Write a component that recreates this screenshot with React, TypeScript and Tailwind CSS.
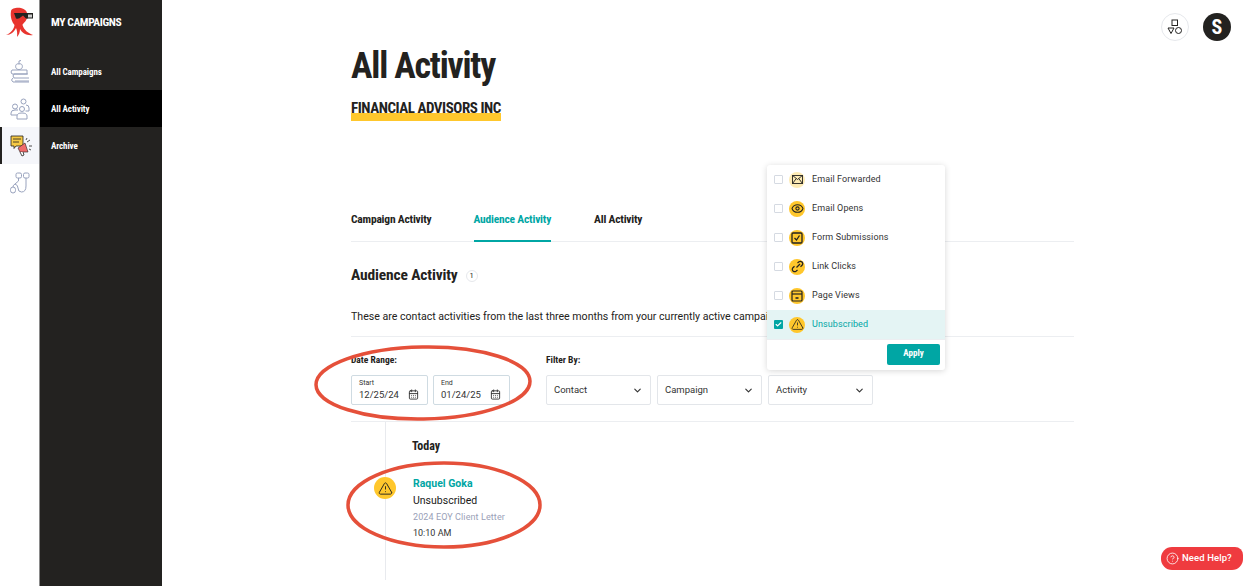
import { ChevronDown, Check, CalendarDays, Eye, TriangleAlert, CircleHelp } from 'lucide-react';
import type { ReactNode } from 'react';

const heading = "font-['Liberation_Sans_Narrow','Roboto_Condensed','Liberation_Sans',sans-serif] font-bold";

const MailIcon = (
  <svg width="11" height="9" viewBox="0 0 12 10" fill="none" stroke="#232220" strokeWidth="1">
    <rect x="0.5" y="0.5" width="11" height="9" />
    <path d="M0.5 0.5 L6 5 L11.5 0.5 M0.5 9.5 L4.5 4 M11.5 9.5 L7.5 4" />
  </svg>
);

const FormIcon = (
  <svg width="12" height="12" viewBox="0 0 12 12" fill="none" stroke="#232220" strokeWidth="1.3">
    <rect x="1" y="1" width="10" height="10" rx="1" />
    <path d="M3.5 6 L5.5 8 L8.5 3.5" />
  </svg>
);

const LinkIcon = (
  <svg width="13" height="13" viewBox="0 0 13 13" fill="none" stroke="#232220" strokeWidth="1.2">
    <path d="M5.5 7.5 L9 4 M6.5 3 L8 1.7 Q9.5 0.7 11 2 Q12.3 3.5 11.3 5 L9.5 6.7 M6.5 10 L5 11.3 Q3.5 12.3 2 11 Q0.7 9.5 1.7 8 L3.5 6.3" />
  </svg>
);

const PageIcon = (
  <svg width="12" height="12" viewBox="0 0 12 12" fill="none" stroke="#232220" strokeWidth="1.2">
    <rect x="1" y="1" width="10" height="10" rx="1" />
    <path d="M1 4 H11" />
    <path d="M4.5 8 H7.5" strokeWidth="1.6" />
  </svg>
);

const navItems = [
  { label: 'All Campaigns', active: false },
  { label: 'All Activity', active: true },
  { label: 'Archive', active: false },
];

const activityOptions = [
  { label: 'Email Forwarded', icon: MailIcon, pale: true },
  { label: 'Email Opens', icon: <Eye size={13} strokeWidth={2} /> },
  { label: 'Form Submissions', icon: FormIcon },
  { label: 'Link Clicks', icon: LinkIcon },
  { label: 'Page Views', icon: PageIcon },
  { label: 'Unsubscribed', icon: <TriangleAlert size={13} strokeWidth={1.5} />, checked: true },
];

function RailButton({ children, active }: { children: ReactNode; active?: boolean }) {
  return (
    <div className={`h-[37px] flex items-center justify-center ${active ? 'bg-[#f5f6fa] border-l-2 border-[#232220]' : ''}`}>
      {children}
    </div>
  );
}

function DateField({ label, value }: { label: string; value: string }) {
  return (
    <div className="w-[77px] h-[30px] border border-[#cfdbe2] rounded-[2px] pl-[7px] pr-[8px]">
      <div className="text-[7px] leading-[9px] pt-[3px] text-[#333]">{label}</div>
      <div className="flex items-center justify-between text-[9.5px] leading-[13px] text-[#333]">
        <span>{value}</span>
        <CalendarDays size={11} strokeWidth={2} className="text-[#333]" />
      </div>
    </div>
  );
}

function FilterSelect({ label }: { label: string }) {
  return (
    <div className="w-[105px] h-[30px] border border-[#e3e6ea] rounded-[2px] flex items-center justify-between pl-[7px] pr-[7px] text-[9.5px] text-[#333]">
      <span>{label}</span>
      <ChevronDown size={11} strokeWidth={2.5} />
    </div>
  );
}

export default function App() {
  return (
    <div className="w-[1249px] h-[586px] overflow-hidden flex bg-white font-['Roboto',sans-serif] text-[#232220]">
      {/* icon rail */}
      <aside className="w-[40px] h-full flex flex-col border-r border-[#8a8a8a] shrink-0">
        <div className="h-[57px]">
          <svg width="39" height="40" viewBox="0 0 39 40">
            <path d="M11 11 C12 7 25 6 27 13 L27 18 C26 22 23 23 22.5 25 C24 30 28 33 33 35 C27 36 22 33 20 29 C20 32 19 35 17 37 C17.5 33 17 30 16 28 C14 32 11 35 6 35 C11 33 14 29 14.5 25 C12 22 10 17 11 11Z" fill="#e8342e" />
            <path d="M14 13 H33 V18.5 H28 Q26 19.5 24.5 17 L23 15.5 L21 17 Q19 19.5 16 18.5 Z" fill="#232220" />
            <path d="M28 14.5 H32 V17.5 H28Z" fill="#cfcfcf" />
          </svg>
        </div>
        <div className="h-[33px] pt-[3px] flex justify-center">
          <svg width="21" height="23" viewBox="0 0 21 23" fill="none" stroke="#98a2bd" strokeWidth="1">
            <path d="M10 4 C7 3 6 6 7 8 C8 10 12 10 13 8 C14 6 13 3 10 4 M10 4 V1 L12 0.5" />
            <path d="M3 10 H18 V14 H3 Q1 12 3 10Z M5 14 Q3 16 5 18 H20 M5 14 H19 M4 18 Q1 20 4 22 H20 M6 21 H20" />
          </svg>
        </div>
        <RailButton>
          <svg width="20" height="22" viewBox="0 0 20 22" fill="none" stroke="#98a2bd" strokeWidth="1">
            <circle cx="13.5" cy="3.5" r="2.5" />
            <circle cx="5" cy="8.5" r="2.5" />
            <circle cx="12" cy="11" r="2.5" />
            <path d="M1 17 V15 Q1 12 5 12 H8 M1 17 H7 M7 21 V18 Q7 15 12 15 Q17 15 17 18 V21Z M16 7 Q19 7 19 10 V13 H15.5" />
          </svg>
        </RailButton>
        <RailButton active>
          <svg width="22" height="22" viewBox="0 0 22 22">
            <path d="M1 1 H13 V11 H6 L4 13.5 V11 H1Z" fill="#f6c945" stroke="#232220" strokeWidth="0.8" />
            <path d="M3 4 H11 M3 7 H9" stroke="#232220" strokeWidth="0.8" />
            <path d="M8 13 L15 8 L18 17 L10 17Z" fill="#ef6a6a" stroke="#232220" strokeWidth="0.6" />
            <path d="M10 17 L12 21 L14 20 L13 17" fill="#fff" stroke="#232220" strokeWidth="0.8" />
            <path d="M17 7 L20 5 M19 11 H22 M16 5 L17 3 M19 14 L21 15" stroke="#232220" strokeWidth="0.8" />
          </svg>
        </RailButton>
        <RailButton>
          <svg width="21" height="22" viewBox="0 0 21 22" fill="none" stroke="#98a2bd" strokeWidth="1">
            <rect x="7" y="1" width="5.5" height="5" rx="1.5" />
            <rect x="14.5" y="1" width="5.5" height="5" rx="1.5" />
            <path d="M9.5 6 V9 L6 12 Q4 13 4 15 M17 6 V14 Q17 20 12.5 20 Q9 20 9 16 Q9 13 6 12" />
            <rect x="1.5" y="15" width="5" height="6" rx="2.5" />
          </svg>
        </RailButton>
      </aside>

      {/* section nav */}
      <nav className="w-[122px] h-full bg-[#232220] text-white shrink-0">
        <div className={`${heading} h-[53px] pl-[11px] pt-[15px] text-[11.5px] leading-[14px] tracking-[-0.4px]`}>MY CAMPAIGNS</div>
        {navItems.map((item) => (
          <div key={item.label} className={`${heading} h-[37px] flex items-center pl-[11px] pt-[2px] text-[9px] tracking-[-0.1px] ${item.active ? 'bg-black' : ''}`}>
            {item.label}
          </div>
        ))}
      </nav>

      {/* main column */}
      <main className="flex-1 relative pl-[189px]">
        <div className="w-[723px]">
          <h1 className={`${heading} pt-[45px] text-[36px] leading-[43px] tracking-[-1.2px]`}>All Activity</h1>
          <div className="mt-[11px] h-[34px]">
            <span className={`${heading} block w-[150px] h-[22px] text-[15px] leading-[18px] tracking-[-0.45px] whitespace-nowrap bg-[linear-gradient(transparent_14px,#ffc72c_14px)]`}>FINANCIAL ADVISORS INC</span>
          </div>

          <div className="mt-[73px] flex gap-[43px] border-b border-[#eceef1] h-[36px]">
            <span className={`${heading} mr-[-1px] text-[11.5px] pt-[5px] tracking-[-0.2px]`}>Campaign Activity</span>
            <span className={`${heading} text-[11.5px] pt-[5px] tracking-[-0.2px] text-[#00a6a4] border-b-2 border-[#00a6a4] h-[36px]`}>Audience Activity</span>
            <span className={`${heading} text-[11.5px] pt-[5px] tracking-[-0.2px]`}>All Activity</span>
          </div>

          <div className="mt-[23px] flex items-center gap-[8px] h-[22px]">
            <h2 className={`${heading} text-[15.5px] tracking-[-0.15px]`}>Audience Activity</h2>
            <span className="w-[12px] h-[12px] rounded-full border border-[#e6e8ec] text-[7.5px] flex items-center justify-center">1</span>
          </div>

          <p className="mt-[22px] h-[27px] text-[10.6px] leading-[16px] whitespace-nowrap">
            These are contact activities from the last three months from your currently active campaigns.
          </p>

          <div className="border-t border-b border-[#eceef1] h-[86px] pt-[16px] flex">
            <div className="w-[195px]">
              <div className={`${heading} text-[9.5px] leading-[14px]`}>Date Range:</div>
              <div className="mt-[8px] flex gap-[5px]">
                <DateField label="Start" value="12/25/24" />
                <DateField label="End" value="01/24/25" />
              </div>
            </div>
            <div>
              <div className={`${heading} text-[9.5px] leading-[14px]`}>Filter By:</div>
              <div className="mt-[8px] flex gap-[6px]">
                <FilterSelect label="Contact" />
                <FilterSelect label="Campaign" />
                <FilterSelect label="Activity" />
              </div>
            </div>
          </div>

          <div className="ml-[34px] border-l border-[#e8eaee] h-[158px] pl-[26px]">
            <div className={`${heading} pt-[15px] text-[12px] leading-[18px]`}>Today</div>
            <div className="relative mt-[21px] pl-[1px]">
              <span className="absolute -left-[38px] top-[1px] w-[22px] h-[22px] rounded-full bg-[#ffc72c] flex items-center justify-center">
                <TriangleAlert size={15} strokeWidth={1.5} />
              </span>
              <div className="text-[10.5px] leading-[16px] font-bold text-[#00a6a4]">Raquel Goka</div>
              <div className="text-[10.5px] leading-[16px] mt-[1px] text-[#1a1a1a]">Unsubscribed</div>
              <div className="text-[9px] leading-[16px] text-[#9aa1b8] tracking-[0.1px]">2024 EOY Client Letter</div>
              <div className="text-[9px] leading-[16px] text-[#333]">10:10 AM</div>
            </div>
          </div>
        </div>

        {/* activity dropdown */}
        <div className="absolute left-[605px] top-[165px] w-[178px] h-[205px] bg-white rounded-[3px] shadow-[0_1px_6px_rgba(0,0,0,0.16)]">
          {activityOptions.map((opt) => (
            <div key={opt.label} className={`h-[29px] flex items-center pl-[7px] ${opt.checked ? 'bg-[#e4f4f4]' : ''}`}>
              <span className={`w-[9px] h-[9px] rounded-[1px] flex items-center justify-center ${opt.checked ? 'bg-[#00a6a4]' : 'border border-[#d5dae2]'}`}>
                {opt.checked && <Check size={7} strokeWidth={4} className="text-white" />}
              </span>
              <span className={`ml-[6px] w-[16px] h-[16px] rounded-full flex items-center justify-center ${opt.pale ? 'bg-[#fdebb5]' : 'bg-[#ffc72c]'}`}>
                {opt.icon}
              </span>
              <span className={`ml-[7px] text-[9px] tracking-[0.1px] ${opt.checked ? 'text-[#00a6a4]' : 'text-[#333]'}`}>{opt.label}</span>
            </div>
          ))}
          <div className="h-[31px] flex justify-end items-center pr-[5px] pb-[2px] border-t border-[#eceef1]">
            <span className={`${heading} w-[53px] h-[21px] rounded-[2px] bg-[#00a6a4] text-white text-[9px] flex items-center justify-center`}>Apply</span>
          </div>
        </div>

        {/* top right actions */}
        <div className="absolute left-[999px] top-[13px] flex items-center gap-[14px]">
          <span className="w-[28px] h-[28px] rounded-full border border-[#e6e8ec] flex items-center justify-center">
            <svg width="16" height="16" viewBox="0 0 16 16" fill="none" stroke="#232220" strokeWidth="1">
              <rect x="5" y="1" width="5.5" height="5.5" />
              <path d="M1 9 H7 L4 14.5Z" />
              <circle cx="11.5" cy="11.5" r="3" />
            </svg>
          </span>
          <span className={`${heading} w-[28px] h-[28px] rounded-full bg-[#232220] text-white text-[20px] flex items-center justify-center`}>S</span>
        </div>

        {/* help pill */}
        <div className="absolute left-[999px] top-[547px] w-[82px] h-[23px] bg-[#ef3b3f] rounded-[11px] rounded-tr-[8px] text-white flex items-center pl-[5px] gap-[3px] text-[9.5px] font-medium tracking-[0.1px]">
          <CircleHelp size={13} strokeWidth={1.5} />
          <span>Need Help?</span>
        </div>

        {/* hand-drawn annotation rings */}
        <svg className="absolute left-0 top-0 pointer-events-none" width="1087" height="586" fill="none" stroke="#e5503a" strokeWidth="3.5">
          <ellipse cx="261" cy="383" rx="107" ry="36" transform="rotate(-1 261 383)" />
          <ellipse cx="282" cy="505" rx="96" ry="42" />
        </svg>
      </main>
    </div>
  );
}
